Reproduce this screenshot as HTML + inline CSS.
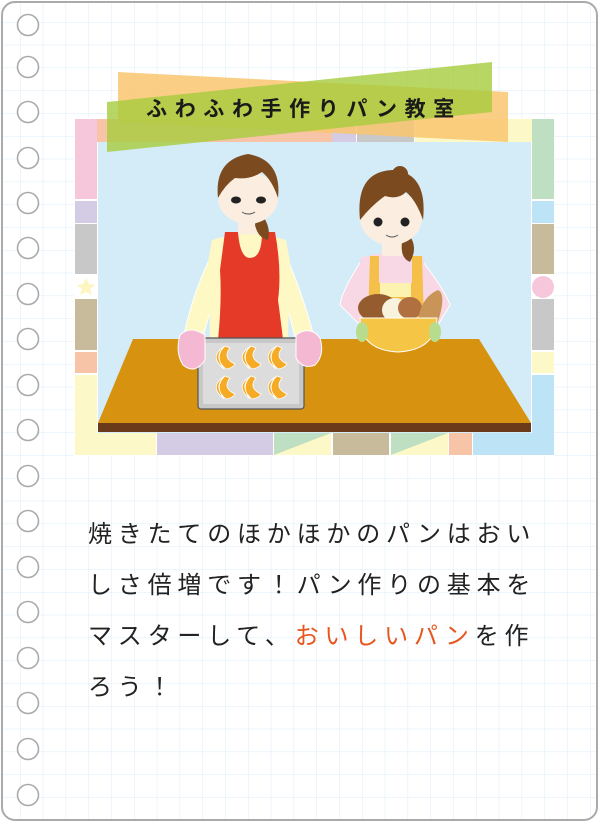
<!DOCTYPE html>
<html><head><meta charset="utf-8"><style>
html,body{margin:0;padding:0;background:#fff;width:600px;height:822px;overflow:hidden}
.t{position:absolute;left:88px;top:509px;font-family:"Liberation Sans","Noto Sans CJK JP",sans-serif;font-size:24px;letter-spacing:5.8px;line-height:51px;color:#222;white-space:nowrap}
.t span{color:#e8561e}
</style></head><body>
<svg width="600" height="822" style="position:absolute;left:0;top:0" xmlns="http://www.w3.org/2000/svg">
<defs>
<pattern id="g" x="20" y="22" width="22.8" height="22.8" patternUnits="userSpaceOnUse">
<path d="M0 0H22.8M0 0V22.8" stroke="#d9ecf9" stroke-width="1" fill="none"/>
</pattern>
<clipPath id="pc"><rect x="2" y="2" width="595" height="818" rx="13"/></clipPath>
</defs>
<rect x="2" y="2" width="595" height="818" rx="13" fill="#fff"/>
<rect x="2" y="2" width="595" height="818" fill="url(#g)" clip-path="url(#pc)"/>
<rect x="2" y="2" width="595" height="818" rx="13" fill="none" stroke="#aaa" stroke-width="2"/>
<g fill="#fff" stroke="#aaa" stroke-width="1.6">
<circle cx="28" cy="25" r="10.5"/><circle cx="28" cy="67" r="10.5"/><circle cx="28" cy="112" r="10.5"/><circle cx="28" cy="158" r="10.5"/><circle cx="28" cy="203" r="10.5"/><circle cx="28" cy="248" r="10.5"/><circle cx="28" cy="294" r="10.5"/><circle cx="28" cy="339" r="10.5"/><circle cx="28" cy="385" r="10.5"/><circle cx="28" cy="430" r="10.5"/><circle cx="28" cy="476" r="10.5"/><circle cx="28" cy="521" r="10.5"/><circle cx="28" cy="567" r="10.5"/><circle cx="28" cy="612" r="10.5"/><circle cx="28" cy="658" r="10.5"/><circle cx="28" cy="703" r="10.5"/><circle cx="28" cy="749" r="10.5"/><circle cx="28" cy="795" r="10.5"/>
</g>
<rect x="74" y="118" width="480" height="338" fill="#fff"/>
<rect x="75" y="119" width="22" height="80" fill="#f6c6da"/>
<rect x="75" y="201" width="22" height="22" fill="#d4cbe5"/>
<rect x="75" y="224" width="22" height="50" fill="#c8c8c8"/>
<polygon points="86,278 89,284 95,285 90,289 92,295 86,292 80,295 82,289 77,285 83,284" fill="#fdf6c0"/>
<rect x="75" y="299" width="22" height="51" fill="#c8bb9c"/>
<rect x="75" y="352" width="22" height="21" fill="#f7c4a8"/>
<rect x="75" y="375" width="22" height="80" fill="#fdf8c8"/>
<rect x="75" y="433" width="81" height="22" fill="#fdf8c8"/>
<rect x="157" y="433" width="116" height="22" fill="#d4cbe5"/>
<rect x="274" y="433" width="57" height="22" fill="#fdf8c8"/><polygon points="274,433 331,433 274,455" fill="#bfdfc2"/>
<rect x="333" y="433" width="56" height="22" fill="#c8bb9c"/>
<rect x="391" y="433" width="57" height="22" fill="#fdf8c8"/><polygon points="391,433 448,433 391,455" fill="#bfdfc2"/>
<rect x="449" y="433" width="23" height="22" fill="#f7c4a8"/>
<rect x="473" y="433" width="80" height="22" fill="#bde3f6"/>
<rect x="532" y="119" width="22" height="80" fill="#bfdfc2"/>
<rect x="532" y="201" width="22" height="22" fill="#bde3f6"/>
<rect x="532" y="224" width="22" height="50" fill="#c8bb9c"/>
<circle cx="543" cy="287" r="11" fill="#f6c6da"/>
<rect x="532" y="299" width="22" height="51" fill="#c8c8c8"/>
<rect x="532" y="352" width="22" height="21" fill="#fdf8c8"/>
<rect x="532" y="375" width="22" height="80" fill="#bde3f6"/>
<rect x="97" y="119" width="100" height="23" fill="#f7c4a8"/>
<rect x="197" y="119" width="135" height="23" fill="#f7c4a8"/>
<rect x="332" y="119" width="24" height="23" fill="#d4cbe5"/>
<rect x="357" y="119" width="57" height="23" fill="#c8c8c8"/>
<rect x="415" y="119" width="117" height="23" fill="#fdf8c8"/>
<rect x="98" y="142" width="433" height="291" fill="#d4ecf8"/>
<path d="M210 258 Q190 300 182 345 L200 350 Q212 300 225 265 Z" fill="#fdf8c4" stroke="#fff" stroke-width="1"/>
<path d="M287 258 Q305 300 316 345 L298 350 Q286 300 275 265 Z" fill="#fdf8c4" stroke="#fff" stroke-width="1"/>
<path d="M212 240 Q248 228 286 240 L290 262 L288 340 L210 340 L208 262 Z" fill="#fdf8c4"/>
<path d="M225 232 L238 232 Q240 258 250 258 Q262 258 262 232 L275 232 Q282 270 278 300 Q282 330 283 340 L218 340 Q222 300 220 270 Z" fill="#e63a28"/>
<rect x="238" y="216" width="22" height="18" fill="#fbeee0"/>
<path d="M258 210 Q272 225 268 240 Q258 238 255 225 Z" fill="#7b4a1f"/>
<ellipse cx="248" cy="198" rx="30" ry="26" fill="#fbeee0"/>
<path d="M218 198 Q214 160 248 154 Q282 160 278 198 Q272 180 262 172 Q250 180 235 178 Q225 185 218 198 Z" fill="#7b4a1f"/>
<ellipse cx="236" cy="200" rx="5" ry="3.5" fill="#222"/><ellipse cx="261" cy="200" rx="5" ry="3.5" fill="#222"/>
<path d="M242 212 Q248 216 255 212" stroke="#555" fill="none" stroke-width="1"/>
<path d="M363 258 Q342 290 340 305 L360 325 L375 300 Z" fill="#f9d8e5" stroke="#fff"/>
<path d="M420 258 Q445 290 450 305 L435 330 L415 300 Z" fill="#f9d8e5" stroke="#fff"/>
<path d="M360 258 Q392 248 424 258 L424 320 L360 320 Z" fill="#f9d8e5"/>
<path d="M370 256 L379 256 L379 283 L412 283 L412 256 L422 256 L424 320 L368 320 Z" fill="#f5c04a"/>
<rect x="380" y="283" width="31" height="14" fill="#fdf3b0"/>
<rect x="382" y="240" width="20" height="16" fill="#fbeee0"/>
<path d="M405 230 Q420 245 410 262 Q400 258 402 242 Z" fill="#7b4a1f"/>
<circle cx="400" cy="174" r="8" fill="#7b4a1f"/>
<ellipse cx="391" cy="218" rx="31" ry="27" fill="#fbeee0"/>
<path d="M360 220 Q355 172 392 170 Q428 172 423 220 Q416 200 406 192 Q398 200 385 196 Q372 205 360 220 Z" fill="#7b4a1f"/>
<circle cx="378" cy="222" r="4.5" fill="#222"/><circle cx="405" cy="222" r="4.5" fill="#222"/>
<path d="M386 235 Q392 239 398 235" stroke="#555" fill="none" stroke-width="1"/>
<polygon points="133,339 479,339 531,423 98,423" fill="#d7930f"/>
<rect x="98" y="423" width="433" height="9" fill="#6b3a1a"/>
<ellipse cx="378" cy="308" rx="20" ry="14" fill="#955c30"/>
<ellipse cx="395" cy="310" rx="13" ry="12" fill="#f8f3dc"/>
<ellipse cx="410" cy="308" rx="12" ry="11" fill="#b07040"/>
<path d="M418 338 Q415 300 438 290 Q448 295 435 330 Z" fill="#c89458"/>
<path d="M360 318 L437 318 Q436 350 398 352 Q360 350 360 318 Z" fill="#f5c645" stroke="#fff"/>
<ellipse cx="362" cy="332" rx="6" ry="10" fill="#b8dc8e"/><ellipse cx="435" cy="332" rx="6" ry="10" fill="#b8dc8e"/>
<rect x="198" y="338" width="106" height="71" rx="3" fill="#c8c8c8" stroke="#555" stroke-width="1.2"/>
<rect x="203" y="343" width="96" height="61" fill="#dcdcdc"/>
<g fill="#f5ab25" stroke="#fff" stroke-width="0.8">
<path d="M225 346 Q208 356 224 369 Q214 356 225 346Z M225 346 Q212 357 226 369 Q233 368 235 364 Q222 358 230 348Z"/>
<path d="M251 346 Q234 356 250 369 Q240 356 251 346Z M251 346 Q238 357 252 369 Q259 368 261 364 Q248 358 256 348Z"/>
<path d="M277 346 Q260 356 276 369 Q266 356 277 346Z M277 346 Q264 357 278 369 Q285 368 287 364 Q274 358 282 348Z"/>
<path d="M225 376 Q208 386 224 399 Q214 386 225 376Z M225 376 Q212 387 226 399 Q233 398 235 394 Q222 388 230 378Z"/>
<path d="M251 376 Q234 386 250 399 Q240 386 251 376Z M251 376 Q238 387 252 399 Q259 398 261 394 Q248 388 256 378Z"/>
<path d="M277 376 Q260 386 276 399 Q266 386 277 376Z M277 376 Q264 387 278 399 Q285 398 287 394 Q274 388 282 378Z"/>
</g>
<path d="M180 335 Q190 325 205 335 L205 360 Q195 375 183 365 Q175 352 180 335Z" fill="#f5b8d3" stroke="#fff"/>
<path d="M296 335 Q310 325 320 338 Q325 355 315 365 Q303 370 296 358Z" fill="#f5b8d3" stroke="#fff"/>
<polygon points="118,72 508,92 508,142 118,122" fill="#f9c56e" opacity="0.85"/>
<polygon points="107,102 492,62 492,112 107,152" fill="#a6cc3c" opacity="0.8"/>
<text x="304" y="116" text-anchor="middle" font-family="Liberation Sans,Noto Sans CJK JP,sans-serif" font-size="21" font-weight="bold" letter-spacing="7.6" fill="#1a1a1a">ふわふわ手作りパン教室</text>
</svg>
<div class="t">焼きたてのほかほかのパンはおい<br>しさ倍増です！パン作りの基本を<br>マスターして、<span>おいしいパン</span>を作<br>ろう！</div>
</body></html>
